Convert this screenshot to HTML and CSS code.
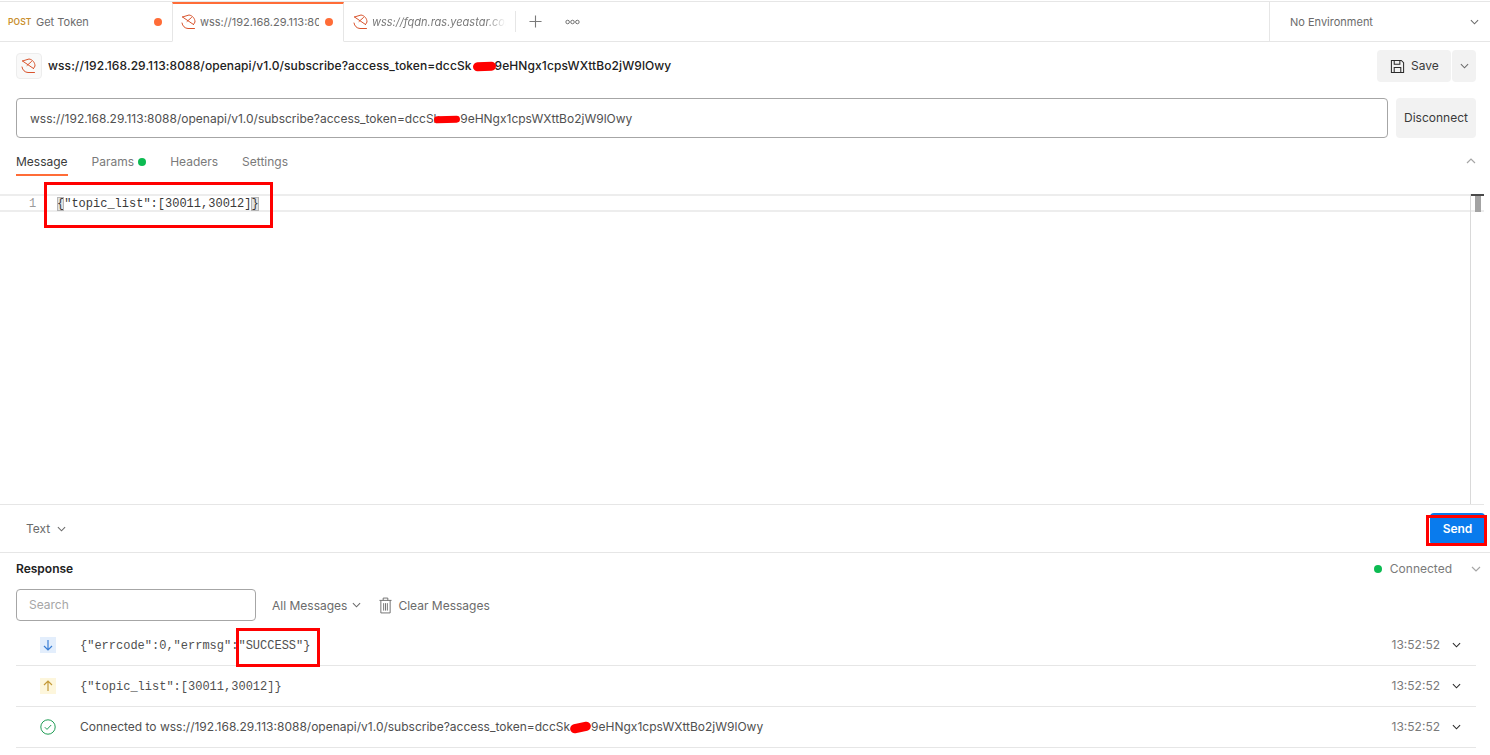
FILE: index.html
```html
<!DOCTYPE html>
<html lang="en">
<head>
<meta charset="utf-8">
<title>Postman WebSocket request</title>
<link rel="stylesheet" href="styles.css">
</head>
<body>
<svg class="defs" width="0" height="0" aria-hidden="true">
  <symbol id="ws" viewBox="0 0 16 16">
    <g fill="none" stroke="#d9532c" stroke-width="1" stroke-linecap="round" stroke-linejoin="round">
      <path d="M1.500 3 8 1c3.400.5 6 3.400 6 7l-1.500 2.500"/>
      <path d="M1.500 3 12.500 10.500"/>
      <path d="M6 7.500 10.500 3.500"/>
      <path d="M1 9c.5 3 2.800 5.400 6 5.500h6.500"/>
    </g>
  </symbol>
  <symbol id="chev" viewBox="0 0 10 6">
    <path d="M1 1l4 4 4-4" fill="none" stroke="currentColor" stroke-width="1.200"/>
  </symbol>
</svg>
<div class="app">
  <header class="tabbar">
    <div class="tab">
      <span class="method">POST</span><span class="tab-name">Get Token</span><span class="dot"></span>
    </div>
    <div class="tab active">
      <svg class="ws-ico"><use href="#ws"/></svg><span class="tab-url">wss://192.168.29.113:8088</span><span class="dot"></span>
    </div>
    <div class="tab last">
      <svg class="ws-ico"><use href="#ws"/></svg><span class="tab-url italic">wss://fqdn.ras.yeastar.com</span>
    </div>
    <div class="tab-actions">
      <svg class="plus" viewBox="0 0 14 14"><path d="M7 .5v13M.5 7h13" stroke="#7a7a7a" stroke-width="1.200" fill="none"/></svg>
      <svg class="more" viewBox="0 0 16 6"><g fill="none" stroke="#6b6b6b"><circle cx="2.800" cy="3" r="1.900"/><circle cx="8" cy="3" r="1.900"/><circle cx="13.200" cy="3" r="1.900"/></g></svg>
    </div>
    <div class="env">
      <span>No Environment</span>
      <svg class="chev env-chev"><use href="#chev"/></svg>
    </div>
  </header>

  <section class="title-row">
    <span class="title-ico"><svg class="ws-ico"><use href="#ws"/></svg></span>
    <h1 class="title">wss://192.168.29.113:8088/openapi/v1.0/subscribe?access_token=dccSk<span class="redact r-title"></span>9eHNgx1cpsWXttBo2jW9lOwy</h1>
    <div class="save-group">
      <button class="btn save">
        <svg class="save-ico" viewBox="0 0 16 16"><g fill="none" stroke="#2b2b2b" stroke-width="1.100"><path d="M1.500 1.500h10.500l2.500 2.500v10.500h-13z"/><path d="M4.500 1.500v4h6v-4M4.500 14.500v-5.500h7v5.500"/></g></svg>
        <span class="save-label">Save</span>
      </button>
      <button class="btn save-more"><svg class="chev"><use href="#chev"/></svg></button>
    </div>
  </section>

  <section class="url-row">
    <div class="url-input">wss://192.168.29.113:8088/openapi/v1.0/subscribe?access_token=dccSk<span class="redact r-url"></span>9eHNgx1cpsWXttBo2jW9lOwy</div>
    <button class="btn disconnect">Disconnect</button>
  </section>

  <nav class="subtabs">
    <span class="subtab current">Message</span>
    <span class="subtab">Params<i class="green-dot"></i></span>
    <span class="subtab">Headers</span>
    <span class="subtab">Settings</span>
    <svg class="chev collapse"><use href="#chev"/></svg>
  </nav>

  <section class="editor">
    <div class="code-line">
      <span class="gutter">1</span>
      <code class="code"><span class="bracket">{</span>"topic_list":[30011,30012]<span class="bracket">}</span></code>
    </div>
    <div class="scroll-mark"><i></i></div>
    <div class="anno a-code"></div>
  </section>

  <section class="send-row">
    <span class="text-select">Text<svg class="chev"><use href="#chev"/></svg></span>
    <div class="send-wrap">
      <button class="send">Send</button>
      <div class="anno a-send"></div>
    </div>
  </section>

  <section class="response">
    <div class="resp-head">
      <strong class="resp-title">Response</strong>
      <span class="status"><i class="green-dot big"></i>Connected<svg class="chev"><use href="#chev"/></svg></span>
    </div>
    <div class="filter-row">
      <div class="search">Search</div>
      <span class="all">All Messages<svg class="chev"><use href="#chev"/></svg></span>
      <span class="clear">
        <svg class="trash" viewBox="0 0 14 18"><g fill="none" stroke="#6b6b6b"><path d="M.5 3.500h13M4.500 3.500v-2.500h5v2.500M2 3.500v13.500h10v-13.500M5 6.500v8M7 6.500v8M9 6.500v8"/></g></svg>
        Clear Messages
      </span>
    </div>
    <ul class="messages">
      <li class="msg">
        <span class="arrow down"><svg viewBox="0 0 12 12"><path d="M6 1v10M2 7l4 4 4-4" fill="none" stroke="#3b7fd4" stroke-width="1.200"/></svg></span>
        <code class="msg-text mono">{"errcode":0,"errmsg":"SUCCESS"}</code>
        <div class="anno a-success"></div>
        <time class="time">13:52:52</time>
        <svg class="chev row-chev"><use href="#chev"/></svg>
      </li>
      <li class="msg">
        <span class="arrow up"><svg viewBox="0 0 12 12"><path d="M6 11v-10M2 5l4-4 4 4" fill="none" stroke="#c49a3a" stroke-width="1.200"/></svg></span>
        <code class="msg-text mono">{"topic_list":[30011,30012]}</code>
        <time class="time">13:52:52</time>
        <svg class="chev row-chev"><use href="#chev"/></svg>
      </li>
      <li class="msg">
        <svg class="check" viewBox="0 0 16 16"><circle cx="8" cy="8" r="7.200" fill="none" stroke="#1f9d55" stroke-width="1"/><path d="M4.800 8.200l2.200 2.200 4.200-4.400" fill="none" stroke="#1f9d55" stroke-width="1"/></svg>
        <span class="msg-text">Connected to wss://192.168.29.113:8088/openapi/v1.0/subscribe?access_token=dccSk<span class="redact r-msg"></span>9eHNgx1cpsWXttBo2jW9lOwy</span>
        <time class="time">13:52:52</time>
        <svg class="chev row-chev"><use href="#chev"/></svg>
      </li>
    </ul>
  </section>
</div>
</body>
</html>
```
FILE: styles.css
```css
* { box-sizing: border-box; }
html, body { margin: 0; height: 100%; }
body {
  background: #fff;
  color: #6b6b6b;
  font-family: Inter, "Noto Sans", sans-serif;
  font-size: 12px;
  overflow: hidden;
}
.defs { position: absolute; }
.app { width: 1490px; height: 755px; display: flex; flex-direction: column; padding-top: 1px; }
button { font-family: inherit; border: 0; cursor: pointer; }

.chev { width: 10px; height: 6px; color: #6b6b6b; flex: none; }

.tabbar {
  height: 41px;
  display: flex;
  border-top: 1px solid #e6e6e6;
  border-bottom: 1px solid #e6e6e6;
  flex: none;
}
.tab {
  width: 172px;
  display: flex;
  align-items: center;
  padding: 0 10px 0 8px;
  white-space: nowrap;
  overflow: hidden;
  margin-bottom: -1px;
  border-bottom: 1px solid #e6e6e6;
}
.tab.active {
  background: #fff;
  border-left: 1px solid #e6e6e6;
  border-right: 1px solid #e6e6e6;
  border-top: 2px solid #ff6c37;
  border-bottom-color: #fff;
  padding: 0 9px 2px 8px;
}
.tab.last { padding: 0 10px 0 9px; }
.method { font-size: 8.5px; font-weight: 600; color: #c98f2e; margin-right: 4px; letter-spacing: .1px; width: 24px; flex: none; }
.tab-name { flex: 1; font-size: 11px; color: #6b6b6b; }
.tab-url {
  width: 119px;
  margin: 0 6px 0 3px;
  overflow: hidden;
  color: #6b6b6b;
  font-size: 11px;
  flex: none;
}
.italic {
  font-style: italic;
  width: 134px;
  color: #7a7a7a;
  -webkit-mask-image: linear-gradient(to right, #000 85%, transparent);
  mask-image: linear-gradient(to right, #000 85%, transparent);
}
.ws-ico { width: 16px; height: 16px; flex: none; }
.dot { width: 8px; height: 8px; border-radius: 50%; background: #ff6c37; flex: none; }
.tab-actions { display: flex; align-items: center; padding-left: 13px; gap: 23px; height: 100%; flex: 1; position: relative; }
.tab-actions::before { content: ""; position: absolute; left: -1px; top: 9px; height: 21px; width: 1px; background: #e6e6e6; }
.plus { width: 13px; height: 13px; }
.more { width: 15px; height: 6px; }
.env {
  width: 221px;
  border-left: 1px solid #e6e6e6;
  display: flex;
  align-items: center;
  justify-content: space-between;
  padding: 0 11px 0 20px;
  font-size: 11px;
  color: #6b6b6b;
}
.env-chev { width: 9px; }

.title-row {
  display: flex;
  align-items: center;
  padding: 8px 14px 0 16px;
  height: 40px;
  flex: none;
}
.title-ico {
  width: 26px; height: 26px;
  border: 1px solid #ededed;
  border-radius: 4px;
  background: #f9f9f9;
  display: flex; align-items: center; justify-content: center;
  margin-right: 6px;
}
.title { margin: 0 0 2px; font-size: 12px; letter-spacing: .09px; font-weight: 500; color: #212121; flex: 1; white-space: nowrap; }
.save-group { display: flex; gap: 1px; }
.btn { background: #f2f2f2; color: #3a3a3a; border-radius: 4px; }
.save { width: 74px; height: 32px; display: flex; align-items: center; gap: 6px; padding-left: 13px; font-size: 12px; }
.save-label { margin-bottom: 2px; }
.save-ico { width: 15px; height: 15px; }
.save-more { width: 24px; height: 32px; display: flex; align-items: center; justify-content: center; }
.save-more .chev { width: 9px; }

.redact { display: inline-block; position: relative; height: 9px; vertical-align: -1px; }
.redact::after {
  content: "";
  position: absolute;
  inset: 0;
  background: #f00;
  border-radius: 5px;
  transform: rotate(-2deg);
}
.r-title { width: 23px; }
.r-url { width: 20px; }
.r-url::after { left: -6px; top: 1px; bottom: 1px; }
.r-msg { width: 21px; }
.r-msg::after { transform: rotate(-12deg); }
.r-title::after { left: 1px; right: -1px; }

.url-row { display: flex; gap: 8px; padding: 16px 14px 0 16px; flex: none; height: 56px; }
.url-input {
  width: 1372px;
  height: 40px;
  border: 1px solid #a6a6a6;
  border-radius: 4px;
  padding: 0 13px;
  line-height: 39px;
  color: #505050;
  font-size: 12px;
  white-space: nowrap;
}
.disconnect { width: 80px; height: 40px; font-size: 12px; padding: 0 0 2px; }

.subtabs {
  height: 40px;
  display: flex;
  align-items: flex-start;
  padding: 0 14px 0 16px;
  gap: 24px;
  flex: none;
}
.subtab { height: 40px; padding-top: 16px; line-height: 15px; font-size: 12px; color: #7a7a7a; }
.subtab.current { color: #3a3a3a; position: relative; }
.subtab.current::after { content: ""; position: absolute; left: 0; right: 0; top: 36px; height: 2px; background: #ff6c37; }
.green-dot { display: inline-block; width: 8px; height: 8px; border-radius: 50%; background: #0cbb52; margin-left: 4px; vertical-align: 0; }
.collapse { margin-left: auto; margin-top: 20px; transform: rotate(180deg); color: #a6a6a6; }

.editor {
  position: relative;
  flex: none;
  height: 327px;
  margin-right: 6px;
  padding-top: 16px;
  border-bottom: 1px solid #e6e6e6;
}
.code-line {
  height: 18px;
  display: flex;
  align-items: center;
  padding-top: 1px;
  border-top: 2px solid #ededed;
  border-bottom: 2px solid #ededed;
}
.gutter { width: 57px; padding-left: 29px; font: 12px "Liberation Mono", monospace; color: #9a9a9a; }
.code { font: 12px "Liberation Mono", monospace; color: #3a3a3a; }
.bracket { background: #e2e2e2; outline: 1px solid #b5b5b5; outline-offset: -1px; }
.scroll-mark {
  position: absolute;
  right: 0; top: 16px; width: 14px; height: 310px;
  border-left: 1px solid #d9d9d9;
}
.scroll-mark::before { content: ""; position: absolute; left: 0; right: 0; top: 0; height: 2px; background: #4a4a4a; }
.scroll-mark i { position: absolute; left: 4px; top: 2px; width: 6px; height: 16px; background: #a3a3a3; }
.anno { position: absolute; border: 3px solid #f00; pointer-events: none; }
.a-code { left: 44px; top: 4px; width: 229px; height: 46px; }

.send-row {
  height: 48px;
  flex: none;
  display: flex;
  justify-content: space-between;
  align-items: center;
  padding: 0 5px 0 26px;
  border-bottom: 1px solid #e6e6e6;
  position: relative;
}
.text-select { display: flex; align-items: center; gap: 7px; font-size: 12px; color: #6b6b6b; }
.text-select .chev { width: 9px; }
.send-wrap { position: relative; display: flex; }
.send {
  width: 55px; height: 32px;
  background: #097bed;
  color: #fff;
  font-weight: 600;
  font-size: 12px;
  border-radius: 4px;
  padding: 0;
}
.a-send { left: -4px; top: 2px; width: 61px; height: 31px; }

.response { flex: 1; padding: 0 14px 0 16px; }
.resp-head { height: 31px; display: flex; justify-content: space-between; align-items: center; }
.resp-title { font-size: 12px; font-weight: 600; color: #212121; }
.status { display: flex; align-items: center; font-size: 12px; color: #7a7a7a; margin-right: -5px; }
.status .chev { margin-left: 19px; color: #a6a6a6; }
.green-dot.big { margin: 0 8px 0 0; }

.filter-row { display: flex; align-items: center; height: 32px; margin-top: 5px; }
.search {
  width: 240px; height: 32px;
  border: 1px solid #a6a6a6;
  border-radius: 4px;
  padding: 0 12px;
  line-height: 30px;
  color: #a6a6a6;
  font-size: 12px;
}
.all { display: flex; align-items: center; gap: 5px; margin-left: 16px; color: #6b6b6b; font-size: 12px; }
.all .chev { width: 9px; }
.clear { display: flex; align-items: center; gap: 6px; margin-left: 18px; color: #6b6b6b; font-size: 12px; }
.trash { width: 13px; height: 17px; }

.messages { list-style: none; margin: 4px 0 0; padding: 0; }
.msg {
  height: 41px;
  display: flex;
  align-items: center;
  border-bottom: 1px solid #e6e6e6;
  position: relative;
  padding-left: 24px;
  padding-right: 15px;
}
.arrow { width: 16px; height: 16px; display: flex; align-items: center; justify-content: center; flex: none; }
.arrow svg { width: 12px; height: 12px; }
.arrow.down { background: #e3eefc; }
.arrow.up { background: #fdf6dc; }
.check { width: 16px; height: 16px; flex: none; }
.msg-text { margin: 0 0 2px 24px; color: #505050; font-size: 12px; flex: 1; white-space: nowrap; }
.mono { font: 12px "Liberation Mono", monospace; color: #505050; margin: 2px 0 0 24px; }
.time { font-size: 12px; color: #7a7a7a; margin: 0 12px 2px 0; }
.row-chev { color: #2b2b2b; width: 9px; }
.a-success { left: 220px; top: 3px; width: 84px; height: 39px; }
```
